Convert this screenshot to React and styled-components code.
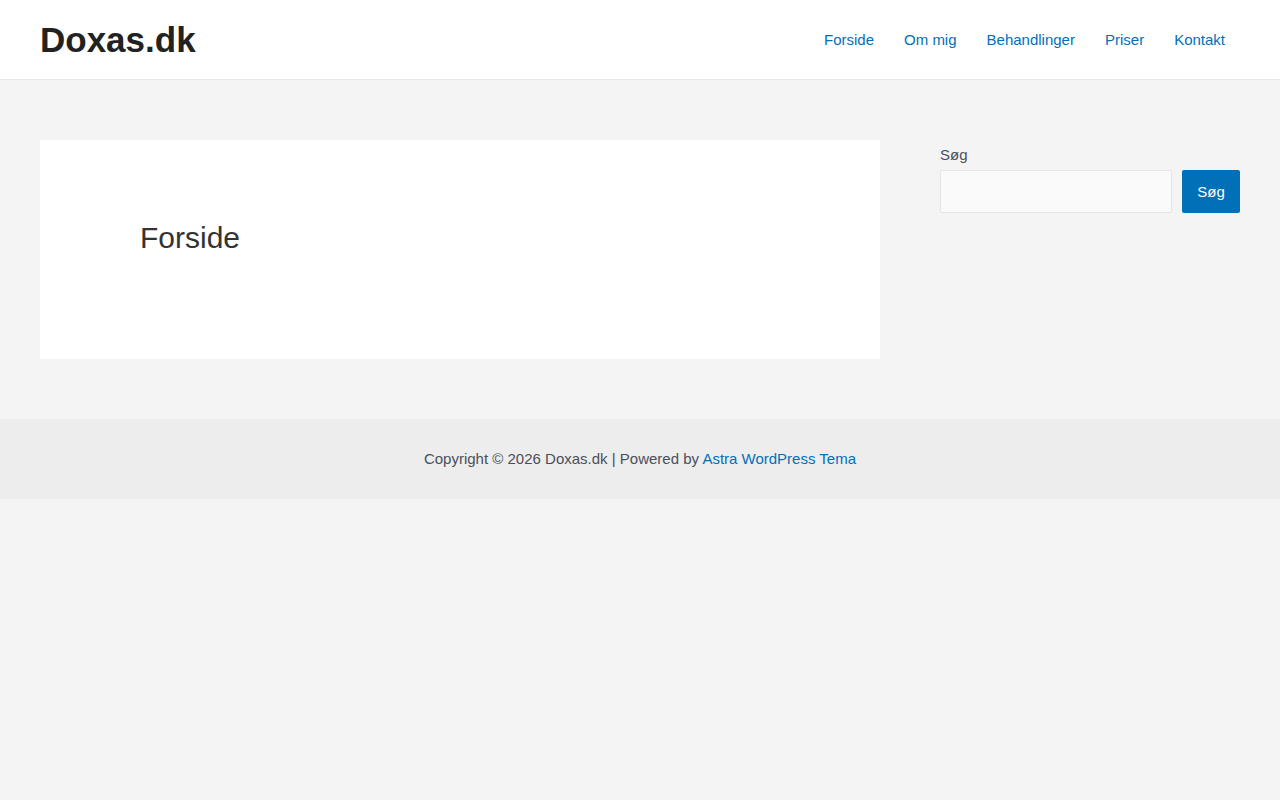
import React from "react";
import styled, { createGlobalStyle } from "styled-components";

const Global = createGlobalStyle`
  html, body { margin: 0; padding: 0; background: #f4f4f4; }
  body { font-family: "Liberation Sans", Arial, sans-serif; font-size: 15px; color: #4b4f58; }
  * { box-sizing: border-box; }
`;

const Header = styled.header`
  background: #fff;
  border-bottom: 1px solid #e8e8e8;
  height: 80px;
  display: flex;
  align-items: center;
  justify-content: space-between;
  padding: 0 40px;
`;

const Logo = styled.a`
  font-size: 35px;
  font-weight: 700;
  color: #222;
  text-decoration: none;
  line-height: 1;
`;

const Nav = styled.nav`
  display: flex;
`;

const NavLink = styled.a`
  color: #0170b9;
  text-decoration: none;
  font-size: 15px;
  padding: 0 15px;
  line-height: 80px;
`;

const Main = styled.div`
  display: grid;
  grid-template-columns: 840px 300px;
  column-gap: 60px;
  padding: 60px 40px;
  align-items: start;
`;

const Article = styled.article`
  background: #fff;
  padding: 80px 100px;
  height: 219px;
`;

const Title = styled.h1`
  margin: 0;
  font-size: 30px;
  font-weight: 400;
  color: #333;
  line-height: 36px;
`;

const Sidebar = styled.aside`
  padding-top: 4px;
`;

const Label = styled.label`
  display: block;
  font-size: 15px;
  color: #4b4f58;
  line-height: 22px;
  margin-bottom: 4px;
`;

const SearchRow = styled.div`
  display: flex;
  gap: 10px;
`;

const Input = styled.input`
  flex: 1;
  height: 43px;
  background: #fafafa;
  border: 1px solid #e5e5e5;
  border-radius: 2px;
  outline: none;
`;

const Button = styled.button`
  width: 58px;
  height: 43px;
  background: #0170b9;
  color: #fff;
  border: none;
  border-radius: 2px;
  font-family: "Liberation Sans", Arial, sans-serif;
  font-size: 15px;
  padding: 0;
`;

const Footer = styled.footer`
  background: #ededed;
  height: 80px;
  display: flex;
  align-items: center;
  justify-content: center;
  padding-bottom: 2px;
  font-size: 15px;
  color: #4b4f58;
`;

const FooterLink = styled.a`
  color: #0170b9;
  text-decoration: none;
`;

export default function App() {
  return (
    <>
      <Global />
      <Header>
        <Logo href="#">Doxas.dk</Logo>
        <Nav>
          {["Forside", "Om mig", "Behandlinger", "Priser", "Kontakt"].map((t) => (
            <NavLink key={t} href="#">{t}</NavLink>
          ))}
        </Nav>
      </Header>
      <Main>
        <Article>
          <Title>Forside</Title>
        </Article>
        <Sidebar>
          <Label>Søg</Label>
          <SearchRow>
            <Input type="search" />
            <Button>Søg</Button>
          </SearchRow>
        </Sidebar>
      </Main>
      <Footer>
        <span>
          Copyright © 2026 Doxas.dk | Powered by <FooterLink href="#">Astra WordPress Tema</FooterLink>
        </span>
      </Footer>
    </>
  );
}
